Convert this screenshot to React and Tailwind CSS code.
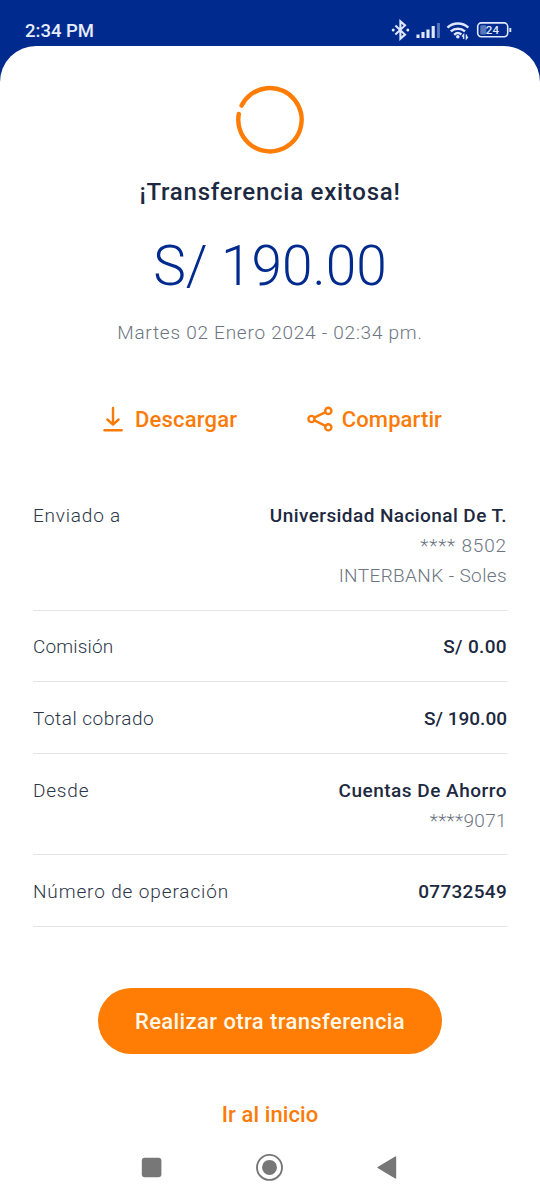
const DETAILS = [
  {
    label: 'Enviado a',
    labelTracking: 'tracking-[0.8px]',
    value: 'Universidad Nacional De T.',
    valueTracking: 'tracking-[0.42px]',
    extra: [
      { text: '**** 8502', tracking: 'tracking-[0.85px]' },
      { text: 'INTERBANK - Soles', tracking: 'tracking-[0.38px]' },
    ],
    spacing: 'pb-[19px]',
  },
  {
    label: 'Comisión',
    labelTracking: 'tracking-[0.15px]',
    value: 'S/ 0.00',
    valueTracking: 'tracking-[0.35px]',
    spacing: 'pt-[21px] pb-[19px]',
  },
  {
    label: 'Total cobrado',
    labelTracking: 'tracking-[0.5px]',
    value: 'S/ 190.00',
    valueTracking: 'tracking-normal',
    spacing: 'pt-[22px] pb-[19px]',
  },
  {
    label: 'Desde',
    labelTracking: 'tracking-[0.8px]',
    value: 'Cuentas De Ahorro',
    valueTracking: 'tracking-[0.5px]',
    extra: [{ text: '****9071', tracking: 'tracking-[0.35px]' }],
    spacing: 'pt-[22px] pb-[18px]',
  },
  {
    label: 'Número de operación',
    labelTracking: 'tracking-[0.87px]',
    value: '07732549',
    valueTracking: 'tracking-[0.3px]',
    spacing: 'pt-[22px] pb-[19px]',
  },
]

const StatusIcons = () => (
  <svg width="124" height="24" viewBox="388 18 124 24" fill="none" stroke="#dfe8ff">
    {/* Bluetooth */}
    <path d="M395.4 25.6l9.6 9-4.6 4V21.4l4.6 4-9.6 9" strokeWidth="2.1" />
    <circle cx="393.2" cy="30" r="1.5" fill="#dfe8ff" stroke="none" />
    <circle cx="407.8" cy="30" r="1.5" fill="#dfe8ff" stroke="none" />
    {/* Signal */}
    <path d="M418 38v-3.6M423 38v-6M428 38v-8.6M433.2 38V26" strokeWidth="3.1" />
    <path d="M438.5 38V23" strokeWidth="2.8" opacity="0.4" />
    {/* Wi-Fi */}
    <path d="M447.5 27.6a15.5 15.5 0 0 1 20.8 0M450.8 31.4a10.5 10.5 0 0 1 14.2 0M454.2 34.8a5.6 5.6 0 0 1 7.2-.4" strokeWidth="2.5" />
    <circle cx="457.8" cy="36.8" r="1.8" fill="#dfe8ff" stroke="none" />
    <path d="M463.6 39v-4.2l-1.5 1.8M466.4 34.4v4.2l1.5-1.8" strokeWidth="1.4" />
    {/* Battery */}
    <rect x="477.7" y="22.9" width="30" height="13.8" rx="3.6" strokeWidth="1.6" />
    <rect x="480.3" y="25.2" width="6" height="9.2" rx="1.2" fill="#dfe8ff" opacity="0.4" stroke="none" />
    <path d="M510.3 28v4" strokeWidth="1.9" />
    <text x="492.4" y="34.2" textAnchor="middle" fill="#dfe8ff" stroke="none" fontSize="11.5" fontWeight="500">24</text>
  </svg>
)

const StatusBar = () => (
  <header className="flex h-[46px] items-start justify-between pt-[18px] pr-7 pl-[25px]">
    <span className="text-[18.5px] leading-[26px] font-medium text-[#e6edff]">2:34 PM</span>
    <StatusIcons />
  </header>
)

const DownloadIcon = () => (
  <svg width="22" height="28" viewBox="102 405 22 28" fill="none" stroke="#fb7b08" strokeWidth="2.4" strokeLinecap="round" strokeLinejoin="round">
    <path d="M113 408v16.6M107.4 419.5l5.6 5.2 5.6-5.2" />
    <path d="M104.6 430.2h17" strokeWidth="2.5" />
  </svg>
)

const ShareIcon = () => (
  <svg width="28" height="28" viewBox="306 405 28 28" fill="none" stroke="#fb7b08" strokeWidth="2.4">
    <circle cx="311.5" cy="419" r="3.1" />
    <circle cx="328.3" cy="410.9" r="3.1" />
    <circle cx="328.3" cy="427.3" r="3.1" />
    <path d="M314.3 417.6l11.2-5.4M314.3 420.4l11.2 5.5" />
  </svg>
)

const DetailRow = ({ label, labelTracking, value, valueTracking, extra = [], spacing }) => (
  <div className={`flex justify-between border-b border-[#e3e4e6] text-[19px] leading-[30px] ${spacing}`}>
    <span className={`font-light text-[#2c3648] ${labelTracking}`}>{label}</span>
    <div className="text-right">
      <p className={`font-medium text-[#1d2940] ${valueTracking}`}>{value}</p>
      {extra.map((line) => (
        <p key={line.text} className={`font-light text-[#6c7582] ${line.tracking}`}>
          {line.text}
        </p>
      ))}
    </div>
  </div>
)

const NavigationBar = () => (
  <nav className="mt-[22px] flex justify-center">
    <svg width="260" height="30" viewBox="140 1152 260 30" fill="#777">
      <rect x="141.8" y="1157.8" width="19.6" height="19.4" rx="3" />
      <circle cx="269.5" cy="1167.4" r="12.5" fill="none" stroke="#777" strokeWidth="1.9" />
      <circle cx="269.5" cy="1167.4" r="7.5" />
      <path d="M378 1167.5l17.5-10.5v21z" stroke="#777" strokeWidth="1.4" strokeLinejoin="round" />
    </svg>
  </nav>
)

const App = () => {
  return (
    <div className="h-[1200px] w-[540px] overflow-hidden bg-[#002a8d] font-['Roboto',sans-serif]">
      <StatusBar />
      <main className="flex h-[1154px] flex-col items-center rounded-t-[36px] bg-white">
        <svg className="mt-[37px]" width="72" height="72" viewBox="234 83 72 72" fill="none">
          <path d="M241.6 105.6A31.7 31.7 0 1 1 238.8 114" stroke="#ff7d05" strokeWidth="4.4" strokeLinecap="round" />
        </svg>

        <h1 className="mt-[21px] text-[24px] leading-8 font-medium tracking-[0.75px] text-[#1d2940]">
          ¡Transferencia exitosa!
        </h1>
        <p className="mt-7 text-[55px] leading-[60px] font-light text-[#002a8d]">S/ 190.00</p>
        <p className="mt-[22px] text-[19px] leading-[30px] font-light tracking-[0.75px] text-[#6c7582]">
          Martes 02 Enero 2024 - 02:34 pm.
        </p>

        <div className="mt-[57px] flex h-7 w-[344px] items-center justify-between pl-1 text-[22px] font-medium text-[#fb7b08]">
          <button className="flex items-center gap-[11px]">
            <DownloadIcon />
            <span className="tracking-[0.2px]">Descargar</span>
          </button>
          <button className="flex items-center gap-2">
            <ShareIcon />
            <span className="tracking-[0.1px]">Compartir</span>
          </button>
        </div>

        <section className="mt-[68px] w-[474px]">
          {DETAILS.map((detail) => (
            <DetailRow key={detail.label} {...detail} />
          ))}
        </section>

        <button className="mt-[61px] h-[66px] w-[344px] rounded-full bg-[#ff7d05] text-[22px] font-medium tracking-[0.4px] text-[#fff8e8]">
          Realizar otra transferencia
        </button>
        <button className="mt-[46px] h-[30px] text-[22px] leading-[30px] font-medium tracking-[0.1px] text-[#fb7b08]">
          Ir al inicio
        </button>

        <NavigationBar />
      </main>
    </div>
  )
}

export default App
